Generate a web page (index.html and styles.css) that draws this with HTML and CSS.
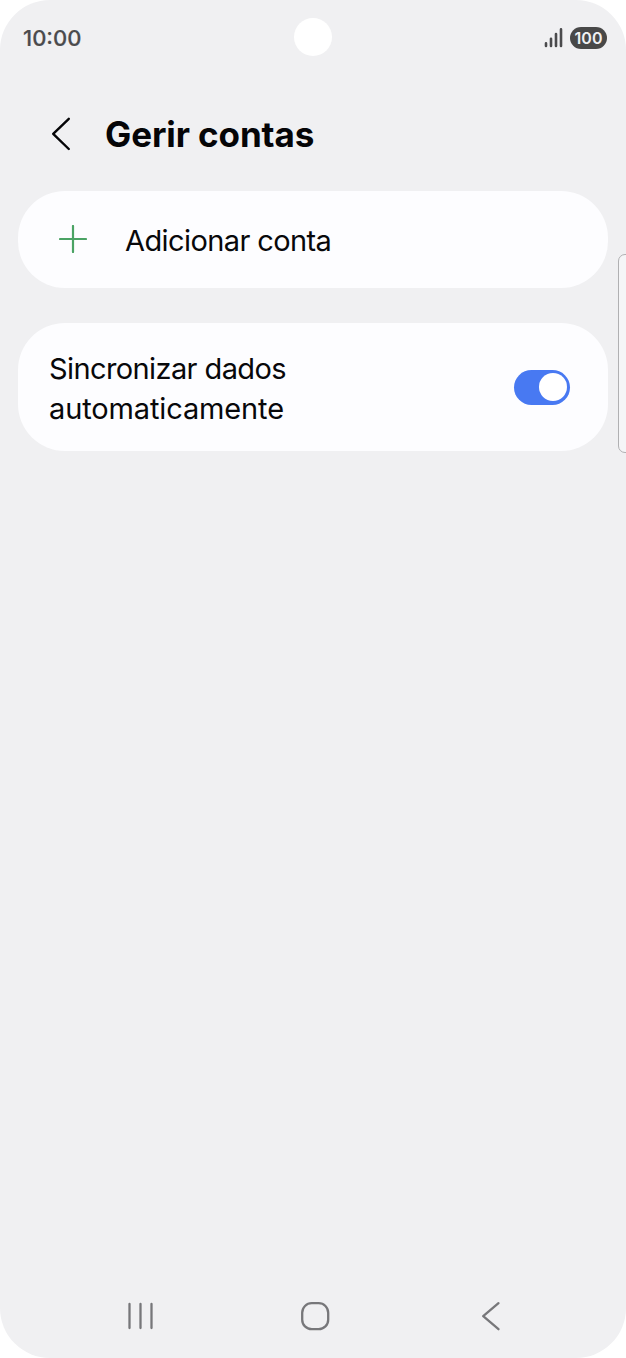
FILE: index.html
```html
<!DOCTYPE html>
<html lang="pt">
<head>
<meta charset="utf-8">
<title>Gerir contas</title>
<link rel="stylesheet" href="styles.css">
</head>
<body>
<div class="screen">
  <header class="status">
    <span class="time">10:00</span>
    <span class="camera"></span>
    <span class="indicators">
      <svg class="signal" width="20" height="22" viewBox="0 0 20 22"><path d="M2 15.400v2.600M7 10.800v7.200M12 6v12M17 1.400v16.600"/></svg>
      <span class="battery">100</span>
    </span>
  </header>
  <div class="title-bar">
    <svg class="back" width="20" height="34" viewBox="0 0 20 34"><path d="M17.800 1.800L2.200 16.800L17.800 32"/></svg>
    <h1 class="title">Gerir contas</h1>
  </div>
  <main class="list">
    <section class="card card-add">
      <svg class="plus" width="28" height="28" viewBox="0 0 28 28"><path d="M14 1v26M1 14h26"/></svg>
      <span class="label label-add">Adicionar conta</span>
    </section>
    <section class="card card-sync">
      <span class="label"><span class="line line-sync">Sincronizar dados</span><span class="line line-auto">automaticamente</span></span>
      <span class="toggle"><span class="knob"></span></span>
    </section>
  </main>
  <nav class="nav">
    <svg class="recents" width="28" height="28" viewBox="0 0 28 28"><path d="M2.500 2v24M13.500 2v24M24.500 2v24"/></svg>
    <svg class="home" width="30" height="30" viewBox="0 0 30 30"><rect x="2.200" y="2.200" width="26" height="26" rx="9.500"/></svg>
    <svg class="nav-back" width="20" height="30" viewBox="0 0 20 30"><path d="M17.500 2.200L2.200 15.200L17.500 28.200"/></svg>
  </nav>
  <div class="edge-panel"></div>
</div>
</body>
</html>
```
FILE: styles.css
```css
body {
  margin: 0;
  background: #fff;
  font-family: Inter, "Open Sans", sans-serif;
}
.screen {
  position: relative;
  display: flex;
  flex-direction: column;
  box-sizing: border-box;
  width: 626px;
  height: 1358px;
  border-radius: 50px;
  background: #f0f0f2;
  overflow: hidden;
}
svg {
  display: block;
  fill: none;
  stroke-linecap: round;
  stroke-linejoin: round;
}
.status {
  display: grid;
  grid-template-columns: 1fr 38px 1fr;
  align-items: center;
  height: 73px;
  padding: 0 19px 0 23px;
  color: #4b4b4d;
}
.time {
  font-size: 22px;
  font-weight: 500;
  line-height: 26px;
  padding-top: 3px;
  -webkit-text-stroke: 0.2px #4b4b4d;
}
.camera {
  width: 38px;
  height: 38px;
  margin-left: -2px;
  border-radius: 50%;
  background: #fff;
}
.indicators {
  display: flex;
  justify-content: flex-end;
  align-items: center;
  gap: 6px;
  padding-top: 2px;
}
.signal {
  stroke: #4b4b4d;
  stroke-width: 2.6;
  margin-top: 3px;
}
.battery {
  width: 37px;
  height: 22px;
  border-radius: 11px;
  background: #484848;
  color: #f0f0f2;
  font-size: 16px;
  font-weight: 600;
  line-height: 22px;
  text-align: center;
}
.title-bar {
  display: flex;
  align-items: center;
  height: 118px;
  padding-left: 51px;
  gap: 34px;
}
.back {
  margin-top: 3px;
  stroke: #050507;
  stroke-width: 2.4;
}
.title {
  margin: 4px 0 0;
  font-size: 35px;
  font-weight: 700;
  line-height: 44px;
  letter-spacing: -0.1px;
  color: #050507;
  white-space: nowrap;
}
.list {
  display: flex;
  flex-direction: column;
  flex: 1;
  gap: 35px;
  padding: 0 18px;
}
.card {
  display: flex;
  align-items: center;
  box-sizing: border-box;
  border-radius: 47px;
  background: #fdfdff;
}
.card-add {
  height: 97px;
  padding-left: 41px;
  gap: 38px;
}
.card-sync {
  justify-content: space-between;
  height: 128px;
  padding: 0 38px 0 31px;
}
.plus {
  margin-bottom: 1px;
  stroke: #4ba364;
  stroke-width: 2.200;
}
.label {
  font-size: 29px;
  line-height: 40px;
  color: #08080a;
  white-space: nowrap;
  padding-top: 3px;
}
.label-add,
.line-sync {
  letter-spacing: -0.6px;
}
.line-auto {
  letter-spacing: -0.13px;
}
.line {
  display: block;
}
.toggle {
  display: flex;
  justify-content: flex-end;
  align-items: center;
  box-sizing: border-box;
  width: 56px;
  height: 35px;
  padding-right: 3px;
  border-radius: 18px;
  background: #4879f2;
}
.knob {
  width: 28px;
  height: 28px;
  border-radius: 50%;
  background: #fff;
}
.nav {
  display: flex;
  align-items: center;
  height: 84px;
  padding-left: 127px;
}
.nav svg {
  stroke: #77777a;
  stroke-width: 2.300;
}
.nav .home {
  margin-left: 145px;
}
.nav .nav-back {
  margin-left: 151px;
}
.edge-panel {
  position: absolute;
  top: 254px;
  right: -10px;
  box-sizing: border-box;
  width: 18px;
  height: 199px;
  border: 1.500px solid #b0b0b2;
  border-radius: 7px;
  background: #f5f5f7;
}
```
